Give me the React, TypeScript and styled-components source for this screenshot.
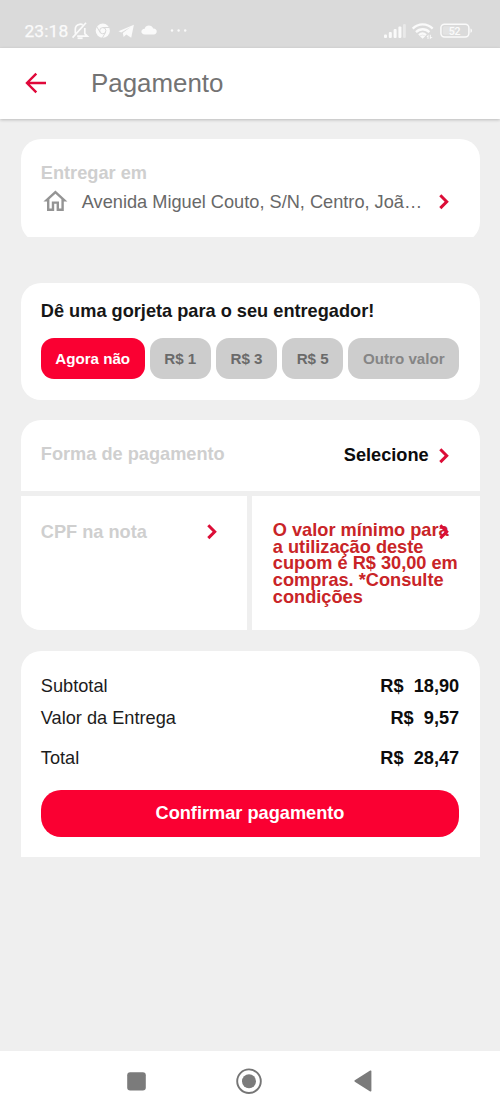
import React from "react";
import styled, { createGlobalStyle } from "styled-components";

const GlobalStyle = createGlobalStyle`
  * { box-sizing: border-box; }
  body { margin: 0; background: #efefef; font-family: "Liberation Sans", Arial, sans-serif; }
  button { font-family: inherit; border: 0; padding: 0; background: none; }
  svg { display: block; flex: none; }
`;

const Screen = styled.div`
  width: 500px;
  height: 1111px;
  display: flex;
  flex-direction: column;
  overflow: hidden;
  background: #efefef;
`;

const StatusBar = styled.div`
  flex: none;
  height: 48px;
  padding: 14px 28px 0 24.5px;
  display: flex;
  justify-content: space-between;
  background: #dadada;
  color: #fafafa;
`;

const StatusGroup = styled.div`
  display: flex;
  align-items: center;
  height: 34px;
`;

const Clock = styled.span`
  width: 46.5px;
  font: 400 17.4px/34px Roboto, sans-serif;
  letter-spacing: 0.1px;
  white-space: nowrap;
  -webkit-text-stroke: 0.25px #fafafa;
`;

const Header = styled.header`
  flex: none;
  height: 71px;
  padding: 0 0 1.5px 25px;
  display: flex;
  align-items: center;
  gap: 44px;
  background: #fff;
  box-shadow: 0 1px 3px rgba(0, 0, 0, 0.22);
`;

const Title = styled.h1`
  margin: 0;
  font-size: 25.9px;
  line-height: 30px;
  font-weight: 400;
  color: #737373;
`;

const Content = styled.main`
  flex: 1;
  padding: 20px 20.5px 0;
  display: flex;
  flex-direction: column;
`;

const AddressClip = styled.section`
  height: 98px;
  overflow: hidden;
  margin-bottom: 45.5px;
`;

const Card = styled.div<{ $h: number; $radius?: string }>`
  flex: none;
  height: ${(p) => p.$h}px;
  border-radius: ${(p) => p.$radius ?? "20px"};
  background: #fff;
  padding: 0 20.3px;
`;

const Label = styled.div`
  font-size: 18.2px;
  line-height: 22px;
  font-weight: 700;
  color: #cfcfcf;
  white-space: nowrap;
`;

const AddressLabel = styled(Label)`
  padding: 22.5px 0 0;
`;

const AddressRow = styled.div`
  display: flex;
  align-items: center;
  height: 36px;
`;

const AddressText = styled.span`
  width: 357px;
  padding-left: 12.2px;
  font-size: 18.2px;
  line-height: 22px;
  color: #686868;
  white-space: nowrap;
`;

const ChevronSlot = styled.span`
  margin-left: 12.2px;
`;

const TipTitle = styled.h2`
  margin: 0;
  padding-top: 17.5px;
  font-size: 18.2px;
  line-height: 22px;
  font-weight: 700;
  color: #161616;
`;

const TipRow = styled.div`
  display: flex;
  gap: 5.2px;
  margin-top: 15.5px;
`;

const TipButton = styled.button<{ $w: number; $active?: boolean; $color?: string }>`
  width: ${(p) => p.$w}px;
  height: 41px;
  flex: none;
  border-radius: 13px;
  background: ${(p) => (p.$active ? "#fa0032" : "#cdcdcd")};
  color: ${(p) => (p.$active ? "#fff" : p.$color ?? "#6a6a6a")};
  font-size: 15.15px;
  font-weight: 700;
  white-space: nowrap;
`;

const PaymentRow = styled(Card)`
  display: flex;
  justify-content: space-between;
  padding-top: 22.5px;
  margin-top: 20.5px;
`;

const Selection = styled.div`
  display: flex;
  align-items: center;
  gap: 10.5px;
  height: 26px;
  padding-right: 10px;
  font-size: 18.2px;
  font-weight: 700;
  color: #0c0c0c;
`;

const SplitRow = styled.div`
  display: grid;
  grid-template-columns: 226.5px 227.5px;
  gap: 5px;
  margin: 5px 0 20.5px;
`;

const CpfCard = styled(Card)`
  display: flex;
  justify-content: space-between;
  padding: 25px 30.3px 0 20.3px;
`;

const CpfArrow = styled.span`
  padding-top: 3px;
`;

const CouponCard = styled(Card)`
  position: relative;
  padding: 26px 0 0 20.8px;
`;

const CouponText = styled.p`
  margin: 0;
  font-size: 18.2px;
  line-height: 16.65px;
  font-weight: 700;
  color: #c92427;
  white-space: nowrap;
`;

const CouponArrow = styled.span`
  position: absolute;
  top: 28px;
  right: 30.3px;
`;

const SummaryCard = styled(Card)`
  padding-top: 19.5px;
`;

const SummaryLine = styled.div<{ $h: number }>`
  display: flex;
  justify-content: space-between;
  align-items: center;
  height: ${(p) => p.$h}px;
  font-size: 18.2px;
  color: #1c1c1c;
`;

const Amount = styled.strong`
  color: #0c0c0c;
  white-space: pre;
`;

const ConfirmButton = styled.button`
  display: block;
  width: 100%;
  height: 47px;
  margin-top: 7.5px;
  border-radius: 20px;
  background: #fa0032;
  color: #fff;
  font-size: 18.2px;
  font-weight: 700;
`;

const NavBar = styled.nav`
  flex: none;
  height: 60px;
  padding: 0 128px 0 126.5px;
  display: flex;
  align-items: center;
  justify-content: space-between;
  background: #fff;
`;

const Chevron = () => (
  <svg width="10" height="16" viewBox="0 0 10 16" fill="none" stroke="#dc0d37" strokeWidth="3">
    <path d="M1.3 1.3 7.7 7.7 1.3 14.1" />
  </svg>
);

const HomeIcon = () => (
  <svg width="28.8" height="28.8" viewBox="0 0 24 24" fill="#949494">
    <path d="m12 5.69 5 4.5V18h-2v-6H9v6H7v-7.81l5-4.5M12 3 2 12h3v8h6v-6h2v6h6v-8h3L12 3Z" />
  </svg>
);

const StatusIcons = () => (
  <svg width="118" height="34" viewBox="71 14 118 34" fill="#fafafa">
    <g fill="none" stroke="#fafafa" strokeWidth="1.7">
      <path d="M72.6 37.6 86 22.8M75.3 33.5V29.4c0-2.7 1.8-4.7 4.2-5.1 1.3-.2 2.4 0 3.2.5M84.8 28v5.6l2.5 2.5H77.2" />
      <path d="M77.6 38.2h5" strokeWidth="1.8" />
    </g>
    <circle cx="102.8" cy="30.7" r="7.1" />
    <g fill="none" stroke="#dadada" strokeWidth="1">
      <circle cx="102.8" cy="30.7" r="3.1" />
      <path d="M102.8 27.5h6.7M100.1 32.3 96.8 26.8M105.5 32.4l-3.1 5.4" />
    </g>
    <path d="m118.5 31.2 15.4-6.5-2.7 13.1-4.9-3.3-2.7 2.6-.8-4 7.8-6.2-9.4 5.5Z" />
    <path d="M145 34.5c-5 0-4.4-5.8-.3-5.7.8-4.2 7.2-4.4 8.5-.2 4.6-.2 4.7 5.9.4 5.9Z" />
    <circle cx="172" cy="30.5" r="1.2" />
    <circle cx="178.6" cy="30.5" r="1.2" />
    <circle cx="185.2" cy="30.5" r="1.2" />
  </svg>
);

const SystemIcons = () => (
  <svg width="90" height="34" viewBox="382 14 90 34" fill="#fafafa">
    <rect x="384" y="34.5" width="3" height="3.4" rx="1" />
    <rect x="388.8" y="32" width="3" height="5.9" rx="1" />
    <rect x="393.6" y="29" width="3" height="8.9" rx="1" />
    <rect x="398.4" y="26.5" width="3" height="11.4" rx="1" />
    <rect x="403" y="24" width="2.8" height="13.9" rx="1" opacity=".45" />
    <g fill="none" stroke="#fafafa" strokeWidth="2.3">
      <path d="M412.7 28.6c5.7-5.6 14.3-5.6 20 0M416 32.1c3.8-3.8 9.6-3.8 13.4 0M419 35.2c2.1-2 4.9-2 7 0" />
    </g>
    <path d="m420 36.3 2.6 2.5 2.6-2.5c-1.5-1.4-3.7-1.4-5.2 0Z" />
    <path d="m426.5 37 2-2.4v4.4h-1v-2ZM429.8 34.7h1v2.2h1.8l-2.8 2.3Z" />
    <rect x="440.9" y="24.2" width="28" height="12.7" rx="3.6" fill="none" stroke="#fafafa" strokeWidth="1.5" />
    <rect x="443" y="26.3" width="12.4" height="8.5" rx="1.5" opacity=".25" />
    <path d="M470.5 28.4c2 .4 2 4 0 4.4Z" />
    <text x="454.6" y="34.7" textAnchor="middle" fontFamily="Roboto, sans-serif" fontSize="10.5" fontWeight="500">
      52
    </text>
  </svg>
);

const summary = [
  { label: "Subtotal", value: "R$  18,90", height: 32 },
  { label: "Valor da Entrega", value: "R$  9,57", height: 32 },
  { label: "Total", value: "R$  28,47", height: 48 },
];

export default function App() {
  return (
    <Screen>
      <GlobalStyle />
      <StatusBar>
        <StatusGroup>
          <Clock>23:18</Clock>
          <StatusIcons />
        </StatusGroup>
        <StatusGroup>
          <SystemIcons />
        </StatusGroup>
      </StatusBar>

      <Header>
        <svg width="22" height="22" viewBox="0 0 22 22" fill="none" stroke="#e0083a" strokeWidth="2.4">
          <path d="M21 11H2.3M11.3 1.7 2 11l9.3 9.3" />
        </svg>
        <Title>Pagamento</Title>
      </Header>

      <Content>
        <AddressClip>
          <Card $h={102.5}>
            <AddressLabel>Entregar em</AddressLabel>
            <AddressRow>
              <HomeIcon />
              <AddressText>Avenida Miguel Couto, S/N, Centro, Joã…</AddressText>
              <ChevronSlot>
                <Chevron />
              </ChevronSlot>
            </AddressRow>
          </Card>
        </AddressClip>

        <Card $h={117}>
          <TipTitle>Dê uma gorjeta para o seu entregador!</TipTitle>
          <TipRow>
            <TipButton $w={103.8} $active>Agora não</TipButton>
            <TipButton $w={61}>R$ 1</TipButton>
            <TipButton $w={61}>R$ 3</TipButton>
            <TipButton $w={61}>R$ 5</TipButton>
            <TipButton $w={111} $color="#858585">Outro valor</TipButton>
          </TipRow>
        </Card>

        <PaymentRow $h={71} $radius="20px 20px 0 0">
          <Label>Forma de pagamento</Label>
          <Selection>
            Selecione
            <Chevron />
          </Selection>
        </PaymentRow>

        <SplitRow>
          <CpfCard $h={134} $radius="0 0 0 20px">
            <Label>CPF na nota</Label>
            <CpfArrow>
              <Chevron />
            </CpfArrow>
          </CpfCard>
          <CouponCard $h={134} $radius="0 0 20px 0">
            <CouponArrow>
              <Chevron />
            </CouponArrow>
            <CouponText>
              O valor mínimo para<br />
              a utilização deste<br />
              cupom é R$ 30,00 em<br />
              compras. *Consulte<br />
              condições
            </CouponText>
          </CouponCard>
        </SplitRow>

        <SummaryCard $h={206} $radius="20px 20px 0 0">
          {summary.map((line) => (
            <SummaryLine key={line.label} $h={line.height}>
              <span>{line.label}</span>
              <Amount>{line.value}</Amount>
            </SummaryLine>
          ))}
          <ConfirmButton>Confirmar pagamento</ConfirmButton>
        </SummaryCard>
      </Content>

      <NavBar>
        <svg width="19" height="19" viewBox="0 0 19 19">
          <rect x="0.2" y="0.2" width="18.6" height="18.4" rx="3" fill="#7b7b7b" />
        </svg>
        <svg width="27" height="27" viewBox="0 0 27 27">
          <circle cx="13" cy="13.2" r="11.8" fill="none" stroke="#757575" strokeWidth="1.9" />
          <circle cx="13" cy="13.2" r="7" fill="#7b7b7b" />
        </svg>
        <svg width="18" height="22" viewBox="0 0 18 22">
          <path d="M1.2 11 16.6 1.3v19.4Z" fill="#7b7b7b" stroke="#7b7b7b" strokeWidth="1.6" strokeLinejoin="round" />
        </svg>
      </NavBar>
    </Screen>
  );
}
